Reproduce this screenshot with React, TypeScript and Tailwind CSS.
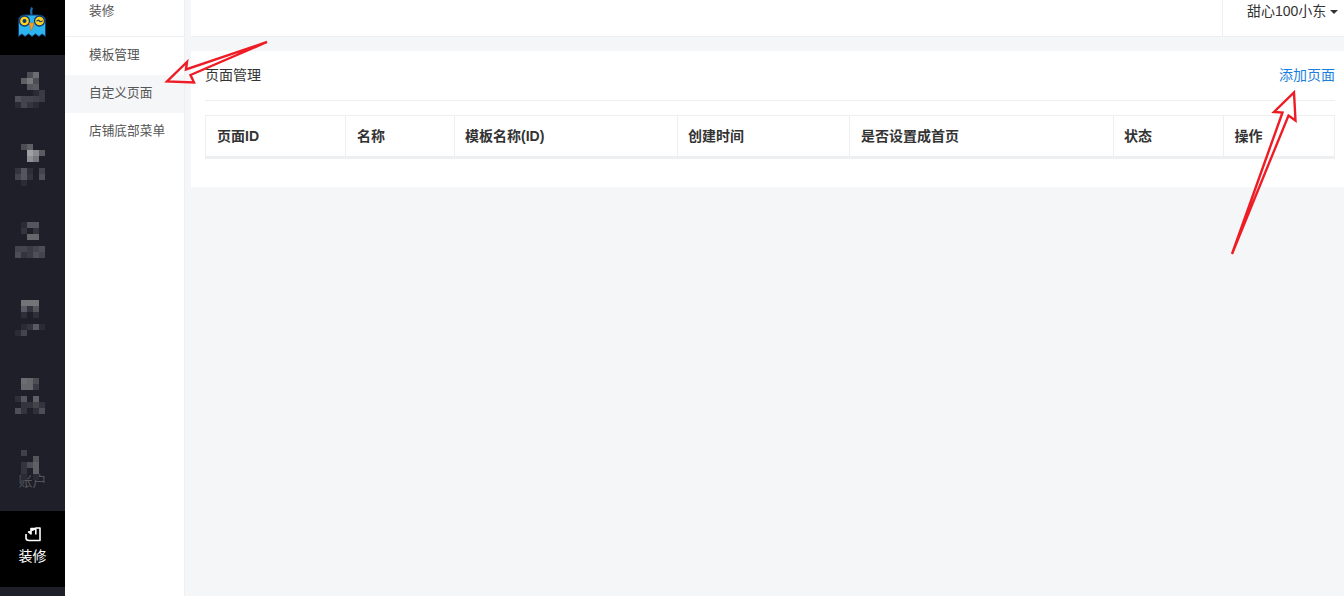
import React from "react";

type Cell = [number, number, string];

const c = {
  a: "#2a2b34", b: "#2e2f38", d: "#33343d", e: "#3a3b44", f: "#3f4048", g: "#44454c",
  h: "#4c4d55", i: "#4f5057", j: "#55565d", k: "#5a5b62", l: "#5f6066", m: "#66676c",
  n: "#6c6d72", o: "#737478", p: "#77787c", q: "#8a8b8f", r: "#8e8f93", s: "#a0a0a4",
};

// Each row: [y within the 76px item, "col:colour ..."]
const mosaics: [number, string][][] = [
  [[17, "2h 3n"], [23, "1l 2p 3h"], [29, "2j 3k"], [35, "3a 4e"], [41, "0i 1g 2g 3f 4e"], [47, "0a 1g 2d 3a"]],
  [[13, "1h 2l"], [19, "2s 3q 4k"], [25, "2r 3p"], [37, "0d 1j 2b 4g"], [43, "0g 1j 2d 4i"], [49, "1a"]],
  [[15, "1a 2j 3j"], [21, "1d 3d"], [27, "2m 3m"], [39, "0g 1g 2e 3g 4h"], [45, "0h 1d 2e 3i 4g"]],
  [[17, "1o 2o 3o"], [23, "1k 2d 3j"], [29, "1b 3b"], [41, "1a 2d 3k 4a"], [47, "0a 1g"]],
  [[19, "1n 2m 3h"], [25, "1m 2m 3e"], [37, "0b 1j 3l"], [43, "1d 2d 3g 4d"], [49, "0i 1d 3b 4h"]],
  [[15, "1f"], [21, "3j"], [27, "1d 2h 3l"], [33, "1d 3l"], [39, "1a 3a"]],
];

function Mosaic({ rows }: { rows: [number, string][] }) {
  const cells: Cell[] = [];
  rows.forEach(([y, spec]) => {
    spec.split(" ").forEach((t) => {
      const col = Number(t[0]);
      cells.push([15 + col * 6, y, (c as Record<string, string>)[t[1]]]);
    });
  });
  return (
    <svg width="65" height="76" className="absolute left-0 top-0" shapeRendering="crispEdges">
      {cells.map(([x, y, fill], i) => (
        <rect key={i} x={x} y={y} width="6" height="6" fill={fill} />
      ))}
    </svg>
  );
}

function Owl() {
  return (
    <svg width="30" height="32" viewBox="0 0 30 32">
      <path d="M14.5 10 C14.5 6 13.5 4.5 15 1.5" stroke="#1a6fb5" strokeWidth="2.2" fill="none" />
      <path d="M1.5 30.5 L1.5 15 Q1.5 9 8 9 L21 9 Q28.5 9 28.5 15 L28.5 30.5 L25 28 L22 30.5 L18.5 28 L15 30.5 L11.5 28 L8 30.5 L5 28 Z" fill="#2bb4ef" stroke="#12396b" strokeWidth="1" />
      <circle cx="7.5" cy="15" r="5" fill="#ffd21f" stroke="#12396b" strokeWidth="1.3" />
      <circle cx="22.5" cy="15" r="5" fill="#ffd21f" stroke="#12396b" strokeWidth="1.3" />
      <circle cx="7.5" cy="15" r="2" fill="#12396b" />
      <path d="M19.5 15.3 Q21 13.3 22.5 15 T25.5 14.5" stroke="#12396b" strokeWidth="1.2" fill="none" />
      <path d="M12 17 L17 17 L14.5 25 Z" fill="#ff9d1e" stroke="#c96a10" strokeWidth="0.5" />
    </svg>
  );
}

function Arrows() {
  return (
    <svg width="1344" height="596" className="absolute left-0 top-0 pointer-events-none" fill="none" stroke="#ee1c25" strokeWidth="2.4" strokeLinejoin="miter" strokeLinecap="round">
      <path d="M267 42 L186 69.5 L187 62 L167 81.5 L194 82.5 L190.5 75 Z" />
      <path d="M1232 254 L1282.5 112.5 L1274 112 L1294 92.5 L1295.5 120.5 L1288.5 115.5 Z" />
    </svg>
  );
}

const columns: [string, string, string][] = [
  ["页面ID", "w-[140px]", "pl-[11px]"],
  ["名称", "w-[109px]", "pl-[11px]"],
  ["模板名称(ID)", "w-[223px]", "pl-[10px]"],
  ["创建时间", "w-[172px]", "pl-[10px]"],
  ["是否设置成首页", "w-[264px]", "pl-[11px]"],
  ["状态", "w-[110px]", "pl-[10px]"],
  ["操作", "flex-1", "pl-[10.5px]"],
];

export default function App() {
  return (
    <div
      className="relative flex h-[596px] w-[1344px] overflow-hidden bg-[#f5f6f8] text-[14px] text-[#333]"
      style={{ fontFamily: '"Liberation Sans", "Noto Sans CJK SC", sans-serif' }}
    >
      <aside className="flex w-[65px] shrink-0 flex-col bg-[#1e1f29]">
        <div className="flex h-[55px] items-start bg-black pl-[17px] pt-[6px]">
          <Owl />
        </div>
        {mosaics.map((rows, i) => (
          <div key={i} className="relative flex h-[76px] flex-col items-center">
            {i === 5 && (
              <span className="mt-[36px] text-[14px] leading-[20px] text-[#55565d]">账户</span>
            )}
            <Mosaic rows={rows} />
          </div>
        ))}
        <div className="flex h-[76px] flex-col items-center bg-black pt-[16px] text-white">
          <svg width="16" height="15" viewBox="0 0 16 15" fill="none" stroke="#fff" strokeWidth="1.6" strokeLinejoin="round">
            <path d="M1 7 L1 11 Q1 13.5 4 13.5 L15 13.5 L15 1 L10.8 1 L10.8 7.5 M10.8 1.6 L6 1.6 L6 7 L3.5 5 Z" />
          </svg>
          <span className="mt-[4px] text-[14px] leading-[20px]">装修</span>
        </div>
      </aside>

      <nav className="w-[120px] shrink-0 border-r border-[#eeeff1] bg-white text-[12.7px] text-[#555]">
        <div className="h-[37px] border-b border-[#eeeff1] pl-[24px] leading-[23px]">装修</div>
        <div className="flex h-[38px] items-center pb-[1px] pl-[24px]">模板管理</div>
        <div className="flex h-[38px] items-center bg-[#f5f6f8] pl-[24px]">自定义页面</div>
        <div className="flex h-[38px] items-center pl-[24px]">店铺底部菜单</div>
      </nav>

      <div className="ml-[6px] flex min-w-0 flex-1 flex-col">
        <header className="flex h-[37px] shrink-0 justify-end border-b border-[#eeeff1] bg-white">
          <div className="flex h-[36px] w-[122px] items-start gap-[4px] border-l border-[#eeeff1] pl-[24px] pt-[1px] leading-[20px]">
            <span className="whitespace-nowrap">甜心100小东</span>
            <span className="mt-[9px] h-0 w-0 border-x-[4px] border-t-[4px] border-x-transparent border-t-[#333]" />
          </div>
        </header>
        <section className="mt-[14px] h-[136px] bg-white px-[14px] pr-[9px]">
          <div className="flex h-[50px] items-center justify-between border-b border-[#eeeff1]">
            <span>页面管理</span>
            <span className="text-[#1a7fe0]">添加页面</span>
          </div>
          <div className="mt-[14px] flex h-[44px] border border-b-[3px] border-[#eeeff1] font-bold">
            {columns.map(([label, width, pad], i) => (
              <div
                key={label}
                className={`flex items-center ${pad} ${width} ${i < columns.length - 1 ? "border-r border-[#eeeff1]" : ""}`}
              >
                {label}
              </div>
            ))}
          </div>
        </section>
      </div>

      <Arrows />
    </div>
  );
}
